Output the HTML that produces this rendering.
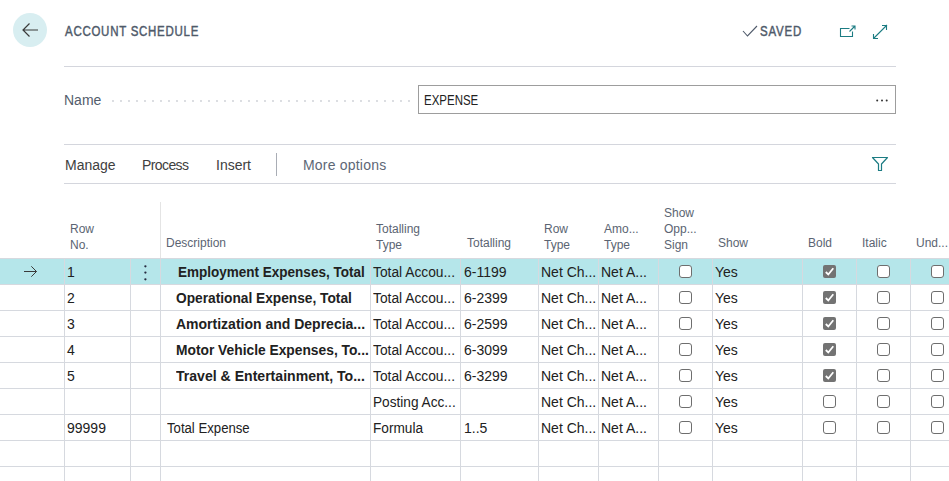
<!DOCTYPE html>
<html><head><meta charset="utf-8"><style>
*{margin:0;padding:0;box-sizing:border-box}
html,body{width:949px;height:481px;overflow:hidden;background:#fff;font-family:"Liberation Sans", sans-serif;}
.a{position:absolute;white-space:nowrap}
.hl{position:absolute;height:1px;background:#d6d9df}
.vl{position:absolute;width:1px;background:#d6d9df}
.t14{font-size:14px;line-height:16px;color:#212121}
.h12{font-size:12px;line-height:16px;color:#5b6472}
.b{font-weight:bold}
.cb{position:absolute;width:13px;height:13px;border:1px solid #6e6e6e;border-radius:3px;background:#fff}
.cbc{position:absolute;width:13px;height:13px;border-radius:2px;background:#737373}
</style></head><body>

<div class="a" style="left:13px;top:13px;width:34px;height:34px;border-radius:50%;background:#d8eef1"></div>
<svg class="a" style="left:0;top:0" width="60" height="60"><path d="M23 30 H38 M29.5 23.5 L23 30 L29.5 36.5" fill="none" stroke="#3b3b3b" stroke-width="1.2"/></svg>
<div class="a" style="left:64.5px;top:23px;font-size:14px;line-height:16px;font-weight:normal;-webkit-text-stroke:0.45px #4f5a6a;color:#4f5a6a;transform-origin:0 0;letter-spacing:0.9px;transform:scaleX(0.82)">ACCOUNT SCHEDULE</div>
<svg class="a" style="left:0;top:0" width="949" height="60"><path d="M743 31 L747.5 36 L757 26" fill="none" stroke="#4f5a6a" stroke-width="1.1"/></svg>
<div class="a" style="left:760px;top:23px;font-size:14px;line-height:16px;font-weight:normal;-webkit-text-stroke:0.45px #4f5a6a;color:#4f5a6a;transform-origin:0 0;letter-spacing:1.0px;transform:scaleX(0.82)">SAVED</div>
<svg class="a" style="left:0;top:0" width="949" height="60" fill="none" stroke="#1c7c83" stroke-width="1.1">
<path d="M849.5 28.5 H840.5 V36.5 H852.5 V31.5"/>
<path d="M849.5 31.5 L854.5 26.5 M851.5 26 H855 V29.5"/>
<path d="M873.5 38.5 L887 25 M882 25.5 H886.5 V30 M873.5 34 V38.5 H878"/>
</svg>
<div class="hl" style="left:64px;top:66px;width:832px;background:#d4d6dd"></div>
<div class="a" style="left:64px;top:92px;font-size:14px;line-height:16px;color:#535d6c">Name</div>
<svg class="a" style="left:0;top:0" width="949" height="120" fill="#cbced4"><circle cx="113" cy="101" r="0.9"/><circle cx="121" cy="101" r="0.9"/><circle cx="129" cy="101" r="0.9"/><circle cx="137" cy="101" r="0.9"/><circle cx="145" cy="101" r="0.9"/><circle cx="153" cy="101" r="0.9"/><circle cx="161" cy="101" r="0.9"/><circle cx="169" cy="101" r="0.9"/><circle cx="177" cy="101" r="0.9"/><circle cx="185" cy="101" r="0.9"/><circle cx="193" cy="101" r="0.9"/><circle cx="201" cy="101" r="0.9"/><circle cx="209" cy="101" r="0.9"/><circle cx="217" cy="101" r="0.9"/><circle cx="225" cy="101" r="0.9"/><circle cx="233" cy="101" r="0.9"/><circle cx="241" cy="101" r="0.9"/><circle cx="249" cy="101" r="0.9"/><circle cx="257" cy="101" r="0.9"/><circle cx="265" cy="101" r="0.9"/><circle cx="273" cy="101" r="0.9"/><circle cx="281" cy="101" r="0.9"/><circle cx="289" cy="101" r="0.9"/><circle cx="297" cy="101" r="0.9"/><circle cx="305" cy="101" r="0.9"/><circle cx="313" cy="101" r="0.9"/><circle cx="321" cy="101" r="0.9"/><circle cx="329" cy="101" r="0.9"/><circle cx="337" cy="101" r="0.9"/><circle cx="345" cy="101" r="0.9"/><circle cx="353" cy="101" r="0.9"/><circle cx="361" cy="101" r="0.9"/><circle cx="369" cy="101" r="0.9"/><circle cx="377" cy="101" r="0.9"/><circle cx="385" cy="101" r="0.9"/><circle cx="393" cy="101" r="0.9"/><circle cx="401" cy="101" r="0.9"/><circle cx="409" cy="101" r="0.9"/></svg>
<div class="a" style="left:418px;top:85px;width:478px;height:29px;border:1px solid #9d9d9d;background:#fff"></div>
<div class="a" style="left:424px;top:92px;font-size:14px;line-height:16px;color:#212121;transform-origin:0 0;transform:scaleX(0.82)">EXPENSE</div>
<svg class="a" style="left:0;top:0" width="949" height="120" fill="#333"><circle cx="877.2" cy="100.5" r="1"/><circle cx="882" cy="100.5" r="1"/><circle cx="886.7" cy="100.5" r="1"/></svg>
<div class="hl" style="left:64px;top:144px;width:832px;background:#d4d6dd"></div>
<div class="hl" style="left:64px;top:183px;width:832px;background:#d4d6dd"></div>
<div class="a" style="left:65px;top:157px;font-size:14px;line-height:16px;color:#404040">Manage</div>
<div class="a" style="left:142px;top:157px;font-size:14px;line-height:16px;color:#404040;letter-spacing:-0.6px">Process</div>
<div class="a" style="left:216px;top:157px;font-size:14px;line-height:16px;color:#404040">Insert</div>
<div class="vl" style="left:276px;top:153px;height:23px;background:#a9adb5"></div>
<div class="a" style="left:303px;top:157px;font-size:14px;line-height:16px;color:#5d6776;letter-spacing:0.2px">More options</div>
<svg class="a" style="left:0;top:0" width="949" height="200" fill="none" stroke="#1c7c83" stroke-width="1.2" stroke-linejoin="round"><path d="M872.5 157.5 H887.5 L881.5 164 V170.5 H878.5 V164 Z"/></svg>
<div class="vl" style="left:160px;top:202px;height:56px;background:#e4e4e4"></div>
<div class="a h12" style="left:70px;top:221px">Row<br>No.</div>
<div class="a h12" style="left:166px;top:235px">Description</div>
<div class="a h12" style="left:376px;top:221px">Totalling<br>Type</div>
<div class="a h12" style="left:467px;top:235px">Totalling</div>
<div class="a h12" style="left:544px;top:221px">Row<br>Type</div>
<div class="a h12" style="left:604px;top:221px">Amo...<br>Type</div>
<div class="a h12" style="left:664px;top:205px">Show<br>Opp...<br>Sign</div>
<div class="a h12" style="left:718px;top:235px">Show</div>
<div class="a h12" style="left:808px;top:235px">Bold</div>
<div class="a h12" style="left:862px;top:235px">Italic</div>
<div class="a h12" style="left:916px;top:235px">Und...</div>
<div class="a" style="left:0;top:258px;width:949px;height:26px;background:#b5e6ea"></div>
<div class="hl" style="left:0;top:258px;width:949px"></div>
<div class="hl" style="left:0;top:284px;width:949px"></div>
<div class="hl" style="left:0;top:310px;width:949px"></div>
<div class="hl" style="left:0;top:336px;width:949px"></div>
<div class="hl" style="left:0;top:362px;width:949px"></div>
<div class="hl" style="left:0;top:388px;width:949px"></div>
<div class="hl" style="left:0;top:414px;width:949px"></div>
<div class="hl" style="left:0;top:440px;width:949px"></div>
<div class="hl" style="left:0;top:466px;width:949px"></div>
<div class="vl" style="left:64px;top:258px;height:223px"></div>
<div class="vl" style="left:130px;top:258px;height:223px"></div>
<div class="vl" style="left:160px;top:258px;height:223px"></div>
<div class="vl" style="left:370px;top:258px;height:223px"></div>
<div class="vl" style="left:460px;top:258px;height:223px"></div>
<div class="vl" style="left:538px;top:258px;height:223px"></div>
<div class="vl" style="left:598px;top:258px;height:223px"></div>
<div class="vl" style="left:658px;top:258px;height:223px"></div>
<div class="vl" style="left:712px;top:258px;height:223px"></div>
<div class="vl" style="left:802px;top:258px;height:223px"></div>
<div class="vl" style="left:856px;top:258px;height:223px"></div>
<div class="vl" style="left:910px;top:258px;height:223px"></div>
<svg class="a" style="left:0;top:258px" width="60" height="26"><path d="M24 13.5 H36.5 M31.3 8.3 L36.5 13.5 L31.3 18.7" fill="none" stroke="#3a3a3a" stroke-width="1"/></svg>
<svg class="a" style="left:140px;top:258px" width="12" height="26" fill="#262a40"><circle cx="5.4" cy="8.3" r="1.15"/><circle cx="5.4" cy="14.6" r="1.15"/><circle cx="5.4" cy="21.3" r="1.15"/></svg>
<div class="a t14" style="left:67px;top:264px">1</div>
<div class="a t14 b" style="left:178px;top:264px;transform-origin:0 0;transform:scaleX(0.965)">Employment Expenses, Total</div>
<div class="a t14" style="left:373px;top:264px;transform-origin:0 0;transform:scaleX(0.985)">Total Accou...</div>
<div class="a t14" style="left:464px;top:264px">6-1199</div>
<div class="a t14" style="left:541px;top:264px">Net Ch...</div>
<div class="a t14" style="left:601px;top:264px">Net A...</div>
<div class="cb" style="left:679px;top:265px"></div>
<div class="a t14" style="left:715px;top:264px">Yes</div>
<div class="cbc" style="left:823px;top:265px"></div>
<svg class="a" style="left:823px;top:265px" width="13" height="13"><path d="M2.8 7 L5.3 9.5 L10.3 3.2" fill="none" stroke="#fff" stroke-width="1.8"/></svg>
<div class="cb" style="left:877px;top:265px"></div>
<div class="cb" style="left:931px;top:265px"></div>
<div class="a t14" style="left:67px;top:290px">2</div>
<div class="a t14 b" style="left:176px;top:290px;transform-origin:0 0;transform:scaleX(0.98)">Operational Expense, Total</div>
<div class="a t14" style="left:373px;top:290px;transform-origin:0 0;transform:scaleX(0.985)">Total Accou...</div>
<div class="a t14" style="left:464px;top:290px">6-2399</div>
<div class="a t14" style="left:541px;top:290px">Net Ch...</div>
<div class="a t14" style="left:601px;top:290px">Net A...</div>
<div class="cb" style="left:679px;top:291px"></div>
<div class="a t14" style="left:715px;top:290px">Yes</div>
<div class="cbc" style="left:823px;top:291px"></div>
<svg class="a" style="left:823px;top:291px" width="13" height="13"><path d="M2.8 7 L5.3 9.5 L10.3 3.2" fill="none" stroke="#fff" stroke-width="1.8"/></svg>
<div class="cb" style="left:877px;top:291px"></div>
<div class="cb" style="left:931px;top:291px"></div>
<div class="a t14" style="left:67px;top:316px">3</div>
<div class="a t14 b" style="left:176px;top:316px;transform-origin:0 0;transform:scaleX(1.0)">Amortization and Deprecia...</div>
<div class="a t14" style="left:373px;top:316px;transform-origin:0 0;transform:scaleX(0.985)">Total Accou...</div>
<div class="a t14" style="left:464px;top:316px">6-2599</div>
<div class="a t14" style="left:541px;top:316px">Net Ch...</div>
<div class="a t14" style="left:601px;top:316px">Net A...</div>
<div class="cb" style="left:679px;top:317px"></div>
<div class="a t14" style="left:715px;top:316px">Yes</div>
<div class="cbc" style="left:823px;top:317px"></div>
<svg class="a" style="left:823px;top:317px" width="13" height="13"><path d="M2.8 7 L5.3 9.5 L10.3 3.2" fill="none" stroke="#fff" stroke-width="1.8"/></svg>
<div class="cb" style="left:877px;top:317px"></div>
<div class="cb" style="left:931px;top:317px"></div>
<div class="a t14" style="left:67px;top:342px">4</div>
<div class="a t14 b" style="left:176px;top:342px;transform-origin:0 0;transform:scaleX(0.985)">Motor Vehicle Expenses, To...</div>
<div class="a t14" style="left:373px;top:342px;transform-origin:0 0;transform:scaleX(0.985)">Total Accou...</div>
<div class="a t14" style="left:464px;top:342px">6-3099</div>
<div class="a t14" style="left:541px;top:342px">Net Ch...</div>
<div class="a t14" style="left:601px;top:342px">Net A...</div>
<div class="cb" style="left:679px;top:343px"></div>
<div class="a t14" style="left:715px;top:342px">Yes</div>
<div class="cbc" style="left:823px;top:343px"></div>
<svg class="a" style="left:823px;top:343px" width="13" height="13"><path d="M2.8 7 L5.3 9.5 L10.3 3.2" fill="none" stroke="#fff" stroke-width="1.8"/></svg>
<div class="cb" style="left:877px;top:343px"></div>
<div class="cb" style="left:931px;top:343px"></div>
<div class="a t14" style="left:67px;top:368px">5</div>
<div class="a t14 b" style="left:176px;top:368px;transform-origin:0 0;transform:scaleX(1.005)">Travel &amp; Entertainment, To...</div>
<div class="a t14" style="left:373px;top:368px;transform-origin:0 0;transform:scaleX(0.985)">Total Accou...</div>
<div class="a t14" style="left:464px;top:368px">6-3299</div>
<div class="a t14" style="left:541px;top:368px">Net Ch...</div>
<div class="a t14" style="left:601px;top:368px">Net A...</div>
<div class="cb" style="left:679px;top:369px"></div>
<div class="a t14" style="left:715px;top:368px">Yes</div>
<div class="cbc" style="left:823px;top:369px"></div>
<svg class="a" style="left:823px;top:369px" width="13" height="13"><path d="M2.8 7 L5.3 9.5 L10.3 3.2" fill="none" stroke="#fff" stroke-width="1.8"/></svg>
<div class="cb" style="left:877px;top:369px"></div>
<div class="cb" style="left:931px;top:369px"></div>
<div class="a t14" style="left:67px;top:394px"></div>
<div class="a t14" style="left:167px;top:394px;transform-origin:0 0;transform:scaleX(1.0)"></div>
<div class="a t14" style="left:373px;top:394px;transform-origin:0 0;transform:scaleX(0.975)">Posting Acc...</div>
<div class="a t14" style="left:464px;top:394px"></div>
<div class="a t14" style="left:541px;top:394px">Net Ch...</div>
<div class="a t14" style="left:601px;top:394px">Net A...</div>
<div class="cb" style="left:679px;top:395px"></div>
<div class="a t14" style="left:715px;top:394px">Yes</div>
<div class="cb" style="left:823px;top:395px"></div>
<div class="cb" style="left:877px;top:395px"></div>
<div class="cb" style="left:931px;top:395px"></div>
<div class="a t14" style="left:67px;top:420px">99999</div>
<div class="a t14" style="left:167px;top:420px;transform-origin:0 0;transform:scaleX(0.94)">Total Expense</div>
<div class="a t14" style="left:373px;top:420px;transform-origin:0 0;transform:scaleX(0.975)">Formula</div>
<div class="a t14" style="left:464px;top:420px">1..5</div>
<div class="a t14" style="left:541px;top:420px">Net Ch...</div>
<div class="a t14" style="left:601px;top:420px">Net A...</div>
<div class="cb" style="left:679px;top:421px"></div>
<div class="a t14" style="left:715px;top:420px">Yes</div>
<div class="cb" style="left:823px;top:421px"></div>
<div class="cb" style="left:877px;top:421px"></div>
<div class="cb" style="left:931px;top:421px"></div>
</body></html>
